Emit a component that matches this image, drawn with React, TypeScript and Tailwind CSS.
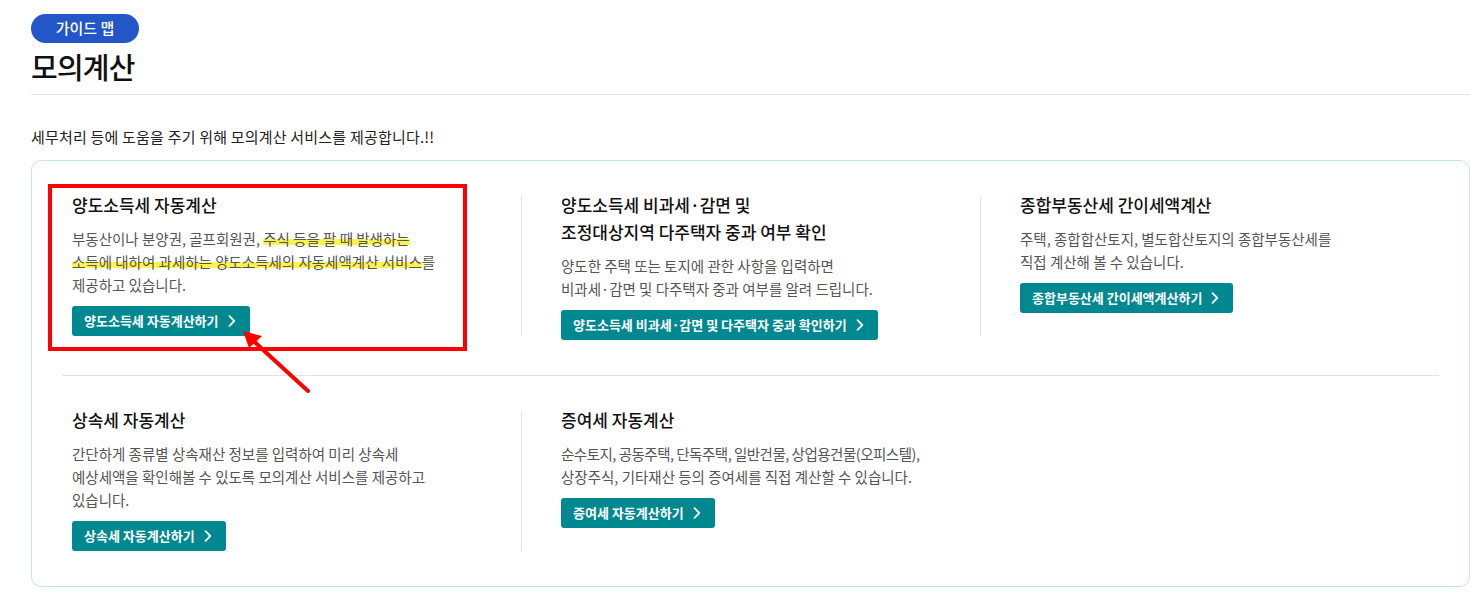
import React from 'react';

const font = { fontFamily: '"Noto Sans CJK KR", "Noto Sans", sans-serif' };

function Chevron() {
    return (
        <svg width="8" height="12" viewBox="0 0 8 12" fill="none" className="shrink-0">
            <polyline points="1.5,1.2 6.3,6 1.5,10.8" stroke="white" strokeWidth="1.8" strokeLinecap="round" strokeLinejoin="round" />
        </svg>
    );
}

function CalcButton({ label }: { label: string }) {
    return (
        <button className="mt-[10px] inline-flex h-[30px] items-center gap-[9px] rounded-[3px] bg-[#008891] pl-[12px] pr-[14px] text-[13px] font-bold text-white">
            <span>{label}</span>
            <Chevron />
        </button>
    );
}

type Item = {
    title: React.ReactNode;
    desc: React.ReactNode;
    button: string;
};

function Column({ item, first }: { item: Item; first?: boolean }) {
    return (
        <div className="flex">
            {!first && <div className="mt-[5px] h-[140px] w-px shrink-0 bg-[#e3e3e3]" />}
            <div className={first ? 'pl-[10px]' : 'pl-[39px]'}>
                <h3 className="text-[17px] font-medium leading-[27px] whitespace-nowrap text-[#111]">{item.title}</h3>
                <p className="mt-[9px] text-[14.5px] leading-[23px] whitespace-nowrap text-[#555]">{item.desc}</p>
                <CalcButton label={item.button} />
            </div>
        </div>
    );
}

const row1: Item[] = [
    {
        title: '양도소득세 자동계산',
        desc: (
            <>
                부동산이나 분양권, 골프회원권,{' '}
                <span className="box-decoration-clone bg-[linear-gradient(transparent_52%,#fff34d_52%,#fff34d_82%,transparent_82%)]">
                    주식 등을 팔 때 발생하는
                    <br />
                    소득에 대하여 과세하는 양도소득세의 자동세액계산 서비스
                </span>
                를
                <br />
                제공하고 있습니다.
            </>
        ),
        button: '양도소득세 자동계산하기',
    },
    {
        title: (
            <>
                양도소득세 비과세·감면 및
                <br />
                조정대상지역 다주택자 중과 여부 확인
            </>
        ),
        desc: (
            <>
                양도한 주택 또는 토지에 관한 사항을 입력하면
                <br />
                비과세·감면 및 다주택자 중과 여부를 알려 드립니다.
            </>
        ),
        button: '양도소득세 비과세·감면 및 다주택자 중과 확인하기',
    },
    {
        title: '종합부동산세 간이세액계산',
        desc: (
            <>
                주택, 종합합산토지, 별도합산토지의 종합부동산세를
                <br />
                직접 계산해 볼 수 있습니다.
            </>
        ),
        button: '종합부동산세 간이세액계산하기',
    },
];

const row2: Item[] = [
    {
        title: '상속세 자동계산',
        desc: (
            <>
                간단하게 종류별 상속재산 정보를 입력하여 미리 상속세
                <br />
                예상세액을 확인해볼 수 있도록 모의계산 서비스를 제공하고
                <br />
                있습니다.
            </>
        ),
        button: '상속세 자동계산하기',
    },
    {
        title: '증여세 자동계산',
        desc: (
            <>
                <span className="tracking-[-0.5px]">순수토지, 공동주택, 단독주택, 일반건물, 상업용건물(오피스텔),</span>
                <br />
                상장주식, 기타재산 등의 증여세를 직접 계산할 수 있습니다.
            </>
        ),
        button: '증여세 자동계산하기',
    },
];

export default function App() {
    return (
        <div className="relative min-h-[596px] overflow-hidden bg-white pl-[31px] pt-[14px]" style={font}>
            <span className="inline-flex h-[29px] w-[108px] items-center justify-center rounded-full bg-[#2356c6] text-[15px] font-medium text-white">
                가이드 맵
            </span>
            <h1 className="mt-[5px] text-[29px] font-medium leading-[36px] tracking-[-0.8px] text-[#111]">모의계산</h1>
            <div className="mt-[10px] h-px bg-[#e5e5e5]" />

            <p className="mt-[31px] text-[15px] leading-[22px] tracking-[0.2px] text-[#222]">
                세무처리 등에 도움을 주기 위해 모의계산 서비스를 제공합니다.!!
            </p>

            <div className="mt-[12px] rounded-[10px] border border-[#c6e5ea] px-[30px] pb-[35px] pt-[30px]">
                <div className="grid grid-cols-3">
                    {row1.map((item, i) => (
                        <Column key={i} item={item} first={i === 0} />
                    ))}
                </div>
                <div className="mt-[35px] h-px bg-[#e3e3e3]" />
                <div className="mt-[30px] grid grid-cols-3">
                    {row2.map((item, i) => (
                        <Column key={i} item={item} first={i === 0} />
                    ))}
                </div>
            </div>

            {/* annotation overlay */}
            <div className="pointer-events-none absolute left-[48px] top-[184px] h-[167px] w-[419px] border-[4px] border-[#f00]" />
            <svg className="pointer-events-none absolute left-0 top-0" width="400" height="420">
                <line x1="308" y1="391" x2="248" y2="336" stroke="#f00" strokeWidth="4" strokeLinecap="round" />
                <polygon points="243,331 262,336 249,348" fill="#f00" />
            </svg>
        </div>
    );
}
